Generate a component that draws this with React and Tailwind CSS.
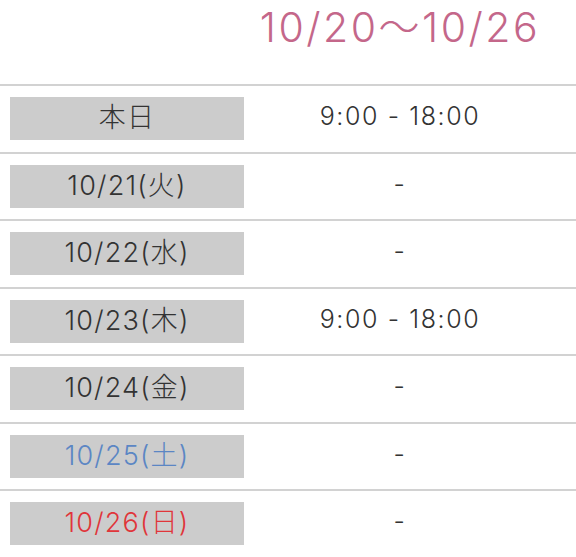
const rows = [
  { label: "本日", hours: "9:00 - 18:00", tone: "text-[#333333]" },
  { label: "10/21(火)", hours: "-", tone: "text-[#333333]" },
  { label: "10/22(水)", hours: "-", tone: "text-[#333333]" },
  { label: "10/23(木)", hours: "9:00 - 18:00", tone: "text-[#333333]" },
  { label: "10/24(金)", hours: "-", tone: "text-[#333333]" },
  { label: "10/25(土)", hours: "-", tone: "text-[#5b86c4]" },
  { label: "10/26(日)", hours: "-", tone: "text-[#e0353a]" },
];

export default function App() {
  return (
    <div
      className="w-[576px] h-[557px] overflow-hidden bg-white"
      style={{ fontFamily: 'Inter, "Noto Sans CJK JP", sans-serif' }}
    >
      <div className="flex h-[84px] pl-[244px] pr-[20px]">
        <div className="flex-1 text-center text-[41px] leading-[48px] pt-[3px] text-[#c4678a] font-light tracking-[2.5px] whitespace-nowrap">
          10/20〜10/26
        </div>
      </div>
      {rows.map((r) => (
        <div
          key={r.label}
          className="flex items-center h-[67.5px] border-t-2 border-[#d2d2d2] pl-[10px] pr-[20px]"
        >
          <div
            className={`w-[234px] h-[43px] bg-[#cccccc] flex items-center justify-center text-[27px] font-light leading-none pb-[2px] tracking-[1.2px] ${r.tone}`}
          >
            {r.label}
          </div>
          <div className="flex-1 text-center text-[25px] font-light leading-none pb-[4px] tracking-[1.6px] text-[#333333]">
            {r.hours}
          </div>
        </div>
      ))}
    </div>
  );
}
